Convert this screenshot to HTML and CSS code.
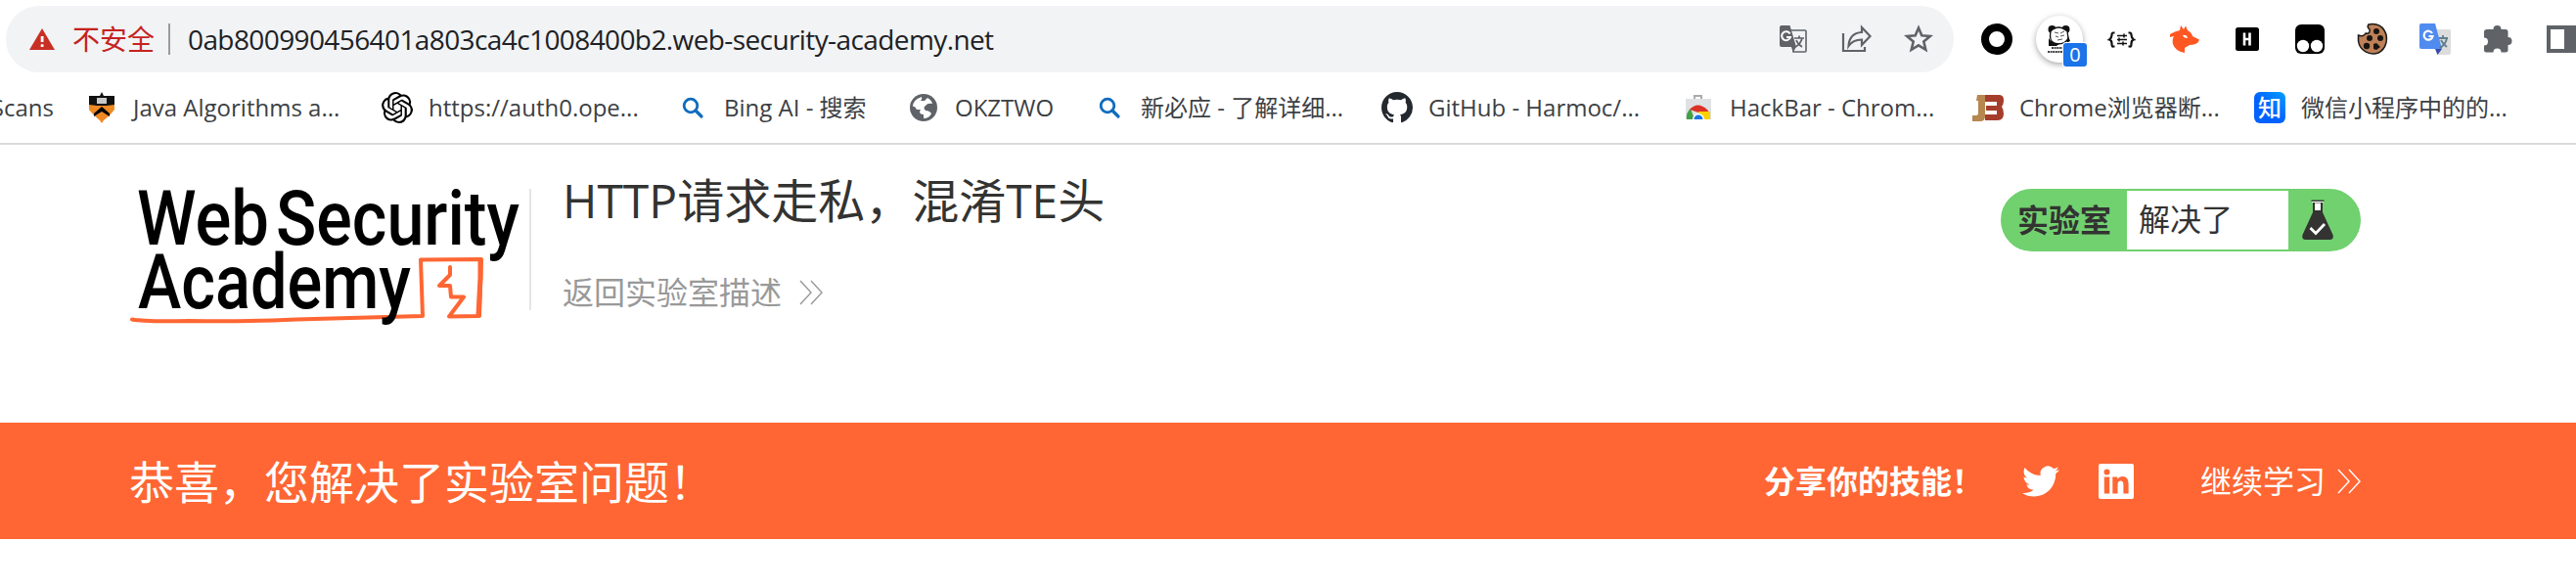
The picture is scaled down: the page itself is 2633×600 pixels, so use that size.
FILE: index.html
```html
<!DOCTYPE html>
<html lang="zh-CN">
<head>
<meta charset="utf-8">
<title>Web Security Academy</title>
<link rel="stylesheet" href="styles.css">
</head>
<body>
<header class="toolbar">
  <div class="omnibox">
    <svg class="warn" width="26" height="22" viewBox="0 0 26 22"><path d="M13 0 26 22H0Z" fill="#c93025"/><path d="M11.7 8h2.8v6h-2.8zM11.7 16.2h2.8V19h-2.8z" fill="#fff"/></svg>
    <span class="insecure">不安全</span>
    <span class="sep"></span>
    <span class="url">0ab800990456401a803ca4c1008400b2.web-security-academy.net</span>
    <div class="actions">
      <svg width="32" height="32" viewBox="0 0 32 32"><path d="M13 7h15q1 0 1 1v20q0 1-1 1H16z" fill="none" stroke="#5f6368" stroke-width="1.6"/><path d="M4 2h8.500l6.500 22 -3 5-2-5H4q-2 0-2-2V4q0-2 2-2z" fill="#5f6368"/><path d="M12.600 10.500A4.500 4.500 0 1 0 13 14H9" fill="none" stroke="#fff" stroke-width="2"/><path d="M17 15h10M22 12.500V15M25 15c-1 4-3 7-7 9M19 17c1 3 3 5 6 7" fill="none" stroke="#5f6368" stroke-width="1.700"/></svg>
      <svg width="32" height="32" viewBox="0 0 32 32" fill="none" stroke="#5f6368" stroke-width="2.200"><path d="M3 10v18h22v-4"/><path d="M8.500 23C9 14.500 14 9.500 22 9V4l8.500 9L22 22v-5.500C16 16.500 11.500 18.500 8.500 23z"/></svg>
      <svg width="32" height="32" viewBox="0 0 32 32"><path d="M16 4.500 19.300 12.300 27.800 13 21.300 18.500 23.300 26.800 16 22.300 8.700 26.800 10.700 18.500 4.200 13 12.700 12.300Z" fill="none" stroke="#5f6368" stroke-width="2.600"/></svg>
    </div>
  </div>
  <div class="extensions">
    <svg width="32" height="32" viewBox="0 0 32 32"><circle cx="16" cy="16" r="12" fill="#fff" stroke="#000" stroke-width="8"/></svg>
    <div class="panda">
      <svg width="26" height="30" viewBox="0 0 26 30"><circle cx="5.500" cy="5" r="4" fill="#111"/><circle cx="19.500" cy="5" r="4" fill="#111"/><path d="M4 7Q12-1 21 7L22 14Q18 22 8 19 2 17 4 7z" fill="#fff" stroke="#111" stroke-width="1.300"/><path d="M2 14Q5 20 14 19L10 22H2zM22 12l2 5-4 2z" fill="#111"/><path d="M8 8l4 1M14 9l4-2M9 12l3 1M14 12l4-1M11 16l5-1" stroke="#555"/><path d="M5 24h11M1 28h16" stroke="#444" stroke-width="2" stroke-dasharray="2 .6"/></svg>
      <span class="count">0</span>
    </div>
    <svg width="32" height="32" viewBox="0 0 32 32" fill="none" stroke="#111" stroke-width="2.200"><path d="M8.500 9.500H7Q5.500 9.500 5.500 12T3 16.500Q5.500 17 5.500 20.500T7 23.500H8.500M22.500 9.500H24Q25.500 9.500 25.500 12T28 16.500Q25.500 17 25.500 20.500T24 23.500H22.500"/><path d="M11 12.500h10M11 16.500h10M11 20.500h10M18 10.500v4M13 14.500v4M17 18.500v4" stroke-width="1.500"/></svg>
    <svg width="32" height="32" viewBox="0 0 32 32"><path d="M1 11Q6 8 11 7L12 2 15 6 17 2.500 19 7Q23 9 24 13L31 16.500 30 19Q27 22 21 22L16 25V30Q6 28 4 21 3 16 5 13L1 14z" fill="#ff5722"/><path d="M14 12q4-1 5 3-4 0-5-3" fill="#fff"/></svg>
    <svg width="32" height="32" viewBox="0 0 32 32"><rect x="4" y="4" width="24" height="24" rx="2.500" fill="#000"/><path d="M13 9.500v13M18.500 9.500v13M13 16h5" stroke="#fff" stroke-width="2.600"/></svg>
    <svg width="32" height="32" viewBox="0 0 32 32"><rect x="1" y="1" width="30" height="30" rx="6" fill="#000"/><circle cx="9" cy="23" r="6.200" fill="#fff"/><circle cx="23" cy="23" r="6.200" fill="#fff"/></svg>
    <svg width="32" height="32" viewBox="0 0 32 32"><path d="M12 1Q23-1 28 7C33 15 30 26 22 30 13 33 3 28 1.500 18L1.500 12Q7 14 9 10 14 11 13 6 10 4 12 1z" fill="#bd8058" stroke="#191919" stroke-width="1.500"/><g fill="#191411"><circle cx="20" cy="8" r="3"/><circle cx="13" cy="15" r="3"/><circle cx="24" cy="15" r="3"/><circle cx="10" cy="23" r="3.200"/><path d="M17 21l3-1 4 4-4 3-3-1z"/></g></svg>
    <svg width="32" height="32" viewBox="0 0 32 32"><path d="M12 6h18q2 0 2 2v22q0 2-2 2H18z" fill="#dcdcdc"/><path d="M16 26h7l-4.500 6z" fill="#3949ab"/><path d="M2 0h14l7 26H2q-2 0-2-2V2Q0 0 2 0z" fill="#508bf0"/><path d="M13 10a4.500 4.500 0 1 0 .500 3H9.500" fill="none" stroke="#fff" stroke-width="2.200"/><path d="M20 15h9M24 12v3M28 15q-1 6-7 10M22 17q2 4 6 7" fill="none" stroke="#607d8b" stroke-width="1.800"/></svg>
    <svg width="32" height="32" viewBox="0 0 32 32"><path d="M5 6h6.500a4 4 0 0 1 8 0H24q2.500 0 2.500 2.500V14a4 4 0 0 1 0 8v5q0 2.500-2.500 2.500H19.500a4 4 0 0 0-8 0H4.500Q2 29.500 2 27V22.500a4 4 0 0 0 0-8V8.500Q2 6 5 6z" fill="#5f6368"/></svg>
    <svg width="32" height="32" viewBox="0 0 32 32"><path d="M2 2h30v28H2zM6 6v20h14V6z" fill="#5f6368" fill-rule="evenodd"/></svg>
  </div>
</header>

<nav class="bookmarks">
  <div class="bm first"><span class="t0">Scans</span></div>
  <div class="bm"><svg width="32" height="32" viewBox="0 0 32 32"><path d="M3 12h26v6L24 24l-6 5-2 3-2-3-6-5-5-6z" fill="#f08a24"/><path d="M3 4h11l2-4 2 4h11v9l-8 1H11l-8-1z" fill="#111"/><path d="M11 6h10v6H11z" fill="#c9c9c9"/><path d="M16 15 24 22v3L16 20 8 25v-3z" fill="#000"/></svg><span class="t1">Java Algorithms a...</span></div>
  <div class="bm"><svg width="32" height="32" viewBox="0 0 24 24"><path d="M22.282 9.821a5.985 5.985 0 0 0-.516-4.910 6.046 6.046 0 0 0-6.510-2.900A6.065 6.065 0 0 0 4.981 4.182a5.985 5.985 0 0 0-3.998 2.900 6.046 6.046 0 0 0 .743 7.097 5.980 5.980 0 0 0 .510 4.911 6.051 6.051 0 0 0 6.515 2.900A5.985 5.985 0 0 0 13.260 24a6.056 6.056 0 0 0 5.772-4.206 5.990 5.990 0 0 0 3.998-2.900 6.056 6.056 0 0 0-.747-7.073zM13.260 22.430a4.476 4.476 0 0 1-2.876-1.040l.141-.081 4.779-2.758a.795.795 0 0 0 .393-.681v-6.737l2.020 1.169a.071.071 0 0 1 .038.052v5.583a4.504 4.504 0 0 1-4.495 4.493zM3.600 18.304a4.471 4.471 0 0 1-.535-3.014l.142.085 4.783 2.759a.771.771 0 0 0 .781 0l5.843-3.369v2.332a.080.080 0 0 1-.033.062L9.740 19.950a4.499 4.499 0 0 1-6.140-1.646zM2.341 7.896a4.485 4.485 0 0 1 2.366-1.973V11.600a.766.766 0 0 0 .388.677l5.815 3.354-2.021 1.169a.076.076 0 0 1-.071 0L3.988 14.013a4.504 4.504 0 0 1-1.647-6.117zm16.596 3.856-5.833-3.387 2.015-1.165a.076.076 0 0 1 .071 0l4.830 2.792a4.494 4.494 0 0 1-.676 8.104v-5.677a.790.790 0 0 0-.407-.667zm2.011-3.024-.142-.085-4.774-2.782a.776.776 0 0 0-.785 0L9.409 9.230V6.897a.066.066 0 0 1 .028-.061l4.830-2.787a4.499 4.499 0 0 1 6.681 4.661zM8.307 12.863l-2.020-1.164a.080.080 0 0 1-.038-.057V6.074a4.499 4.499 0 0 1 7.376-3.453l-.142.080-4.778 2.758a.795.795 0 0 0-.393.682zm1.097-2.365 2.602-1.500 2.607 1.500v2.999l-2.597 1.500-2.607-1.500z"/></svg><span class="t2">https://auth0.ope...</span></div>
  <div class="bm"><svg width="32" height="32" viewBox="0 0 32 32" fill="none" stroke="#0f6cbd"><circle cx="14" cy="14" r="6.800" stroke-width="2.800"/><path d="M19 19l6 6" stroke-width="3.200" stroke-linecap="round"/></svg><span class="t3">Bing AI - 搜索</span></div>
  <div class="bm"><svg width="32" height="32" viewBox="0 0 32 32"><circle cx="16" cy="16" r="14" fill="#5f6368"/><path d="M5 15Q5 8 14 5q1 2-1 4h4l3-3q4 2 5 6-5-1-7 2-3 2 0 5 4 0 6 3-2 5-8 5v-4q-4 0-4-3l1-2H9q-2-4-4-3z" fill="#fff"/></svg><span class="t4">OKZTWO</span></div>
  <div class="bm"><svg width="32" height="32" viewBox="0 0 32 32" fill="none" stroke="#0f6cbd"><circle cx="14" cy="14" r="6.800" stroke-width="2.800"/><path d="M19 19l6 6" stroke-width="3.200" stroke-linecap="round"/></svg><span class="t5">新必应 - 了解详细...</span></div>
  <div class="bm"><svg width="32" height="32" viewBox="0 0 16 16"><path fill="#24292f" d="M8 0C3.580 0 0 3.580 0 8c0 3.540 2.290 6.530 5.470 7.590.4.070.55-.17.55-.38 0-.19-.01-.82-.01-1.490-2.010.37-2.530-.49-2.690-.94-.09-.23-.48-.94-.82-1.130-.28-.15-.68-.52-.01-.53.63-.01 1.080.58 1.230.82.72 1.210 1.870.87 2.330.66.07-.52.28-.87.51-1.070-1.780-.2-3.640-.89-3.640-3.950 0-.87.31-1.590.82-2.150-.08-.2-.36-1.020.08-2.120 0 0 .67-.21 2.200.82.64-.18 1.320-.27 2-.27s1.360.09 2 .27c1.530-1.040 2.200-.82 2.200-.82.44 1.100.16 1.920.08 2.120.51.56.82 1.270.82 2.150 0 3.070-1.870 3.750-3.650 3.950.29.25.54.73.54 1.480 0 1.070-.01 1.930-.01 2.200 0 .21.15.46.55.38A8.010 8.010 0 0 0 16 8c0-4.420-3.580-8-8-8z"/></svg><span class="t6">GitHub - Harmoc/...</span></div>
  <div class="bm"><svg width="32" height="32" viewBox="0 0 32 32"><path d="M12 7V4h7v3" fill="none" stroke="#aaa" stroke-width="2"/><path d="M3 7h26v21H3z" fill="#dfe1e2"/><path d="M4 28q-1-7 4-11l4 11z" fill="#43a047"/><path d="M7 18q8-9 18 0l2 3H16z" fill="#db3226"/><path d="M16 20h12v8h-9z" fill="#fdd000"/><path d="M10 28a6 6 0 0 1 12 0" fill="#fff"/><path d="M11.500 28a4.500 4.500 0 0 1 9 0" fill="#1a73e8"/></svg><span class="t7">HackBar - Chrom...</span></div>
  <div class="bm"><svg width="32" height="32" viewBox="0 0 32 32"><path d="M5 3h8v22q0 5-5 5H0v-6h4q2 0 2-3V9H4z" fill="#b6874f"/><path d="M13 3h14q5 0 5 5 0 5-2 7 2 3 2 7 0 7-6 7H13v-6h12v-4H14v-5h11v-4H13z" fill="#a43d2b"/></svg><span class="t8">Chrome浏览器断...</span></div>
  <div class="bm"><span class="zhi">知</span><span class="t9">微信小程序中的的...</span></div>
</nav>

<section class="lab">
  <svg class="logo" width="408" height="150" viewBox="0 0 408 150">
    <g fill="none" stroke="#ff6633" stroke-linejoin="round" stroke-linecap="round"><path d="M2 139.500Q15 142 60 141 120 142 170 139.500L299 136 297 78.500 359 78 357 136 326 136.500 341 116.500H328L327 105H316L327 94V86" stroke-width="4"/><path d="M358 79V97L356 135" stroke-width="5"/></g>
    <g class="word"><text x="7" y="62.500" textLength="135" lengthAdjust="spacingAndGlyphs">Web</text><text x="149" y="62.500" textLength="249" lengthAdjust="spacingAndGlyphs">Security</text><text x="8" y="127.500" textLength="279" lengthAdjust="spacingAndGlyphs">Academy</text></g>
  </svg>
  <div class="title">
    <h1>HTTP请求走私，混淆TE头</h1>
    <a class="back">返回实验室描述 <svg width="24" height="26" viewBox="0 0 24 26" fill="none" stroke="#999" stroke-width="1.400"><path d="M1 1 12 13 1 25M12 1 23 13 12 25"/></svg></a>
  </div>
  <div class="status">
    <b>实验室</b><span>解决了</span>
    <svg width="34" height="42" viewBox="0 0 34 42"><path d="M12 2.500V13L1.500 36Q0 41 5 41H29Q34 41 32.500 36L22 13V2.500z" fill="#333332"/><path d="M14 3.500h6V11h-6zM11 1.500h12v1.500H11z" fill="#fff"/><path d="M10.500 1.200h13" stroke="#333332" stroke-width="1.400"/><path d="M9.500 29l5.500 5.500 9-9.500" fill="none" stroke="#fff" stroke-width="2.800"/></svg>
  </div>
</section>

<section class="banner">
  <h2>恭喜，您解决了实验室问题！</h2>
  <div class="share">
    <b>分享你的技能！</b>
    <svg class="twitter" width="38" height="38" viewBox="0 0 24 24"><path fill="#fff" d="M23.953 4.570a10 10 0 0 1-2.825.775 4.958 4.958 0 0 0 2.163-2.723c-.951.555-2.005.959-3.127 1.184a4.920 4.920 0 0 0-8.384 4.482C7.690 8.095 4.067 6.130 1.640 3.162a4.822 4.822 0 0 0-.666 2.475c0 1.710.87 3.213 2.188 4.096a4.904 4.904 0 0 1-2.228-.616v.060a4.923 4.923 0 0 0 3.946 4.827 4.996 4.996 0 0 1-2.212.085 4.936 4.936 0 0 0 4.604 3.417 9.867 9.867 0 0 1-6.102 2.105c-.39 0-.779-.023-1.170-.067a13.995 13.995 0 0 0 7.557 2.209c9.053 0 13.998-7.496 13.998-13.985 0-.21 0-.42-.015-.63A9.935 9.935 0 0 0 24 4.590z"/></svg>
    <svg class="linkedin" width="36" height="36" viewBox="0 0 36 36"><rect width="36" height="36" rx="2" fill="#fff"/><g fill="#ff6633"><circle cx="8.500" cy="8.500" r="3"/><path d="M5.800 13.500h5.400V30.500H5.800zM14.300 13.500h5v2.400q1.800-2.900 5.300-2.900 6 0 6 7.500v10h-5.200v-9q0-4-2.800-4-3.100 0-3.100 4v9h-5.200z"/></g></svg>
    <a class="next">继续学习<svg width="24" height="26" viewBox="0 0 24 26" fill="none" stroke="#fff" stroke-width="1.400"><path d="M1 1 12 13 1 25M12 1 23 13 12 25"/></svg></a>
  </div>
</section>
</body>
</html>
```
FILE: styles.css
```css
* { box-sizing: border-box; }
body {
  margin: 0;
  width: 2633px;
  height: 600px;
  overflow: hidden;
  background: #fff;
  color: #333332;
  font-family: "Open Sans", "Noto Sans CJK SC", sans-serif;
  font-size: 32px;
  line-height: 1;
  white-space: nowrap;
}
svg { display: block; flex: none; overflow: visible; }
h1, h2 { margin: 0; font-weight: 400; }

.toolbar { display: flex; height: 80px; padding: 6px 0 0 6px; }
.omnibox {
  display: flex; align-items: center;
  width: 1992px; height: 68px; padding: 0 20px 0 24px;
  border-radius: 34px; background: #f1f3f5; font-size: 28px;
}
.insecure { margin-left: 18px; width: 84px; color: #c5221f; }
.sep { width: 2px; height: 32px; margin: 0 18px 0 14px; background: #9a9b9d; }
.url { color: #202124; letter-spacing: -0.6px; }
.actions { display: flex; gap: 32px; margin-left: auto; }
.extensions { display: flex; align-items: center; height: 68px; margin-left: 28px; gap: 32px; }
.panda {
  position: relative; display: flex; flex: none; justify-content: center; align-items: center;
  width: 48px; height: 48px; margin: 0 -8px; border-radius: 24px;
  background: #fff; box-shadow: 0 2px 6px rgba(0,0,0,.35);
}
.count {
  position: absolute; left: 28px; top: 28px; width: 24px; height: 24px;
  border-radius: 3px; background: #1a73e8; color: #fff; box-shadow: 0 0 0 1px #fff;
  font-size: 20px; line-height: 24px; text-align: center;
}

.bookmarks {
  display: grid; height: 68px; padding-bottom: 6px;
  grid-template-columns: 88px 302px 302px 236px 190px 294px 308px 296px 288px 1fr;
  align-items: center; border-bottom: 2px solid #dadcdc;
  color: #3c4043; font-size: 24px;
}
.bm { display: flex; align-items: center; gap: 16px; line-height: 32px; }
.first { justify-content: flex-end; width: 55px; }
.zhi {
  width: 32px; height: 32px; border-radius: 6px; text-align: center; line-height: 31px;
  background: linear-gradient(45deg, #0061ff 45%, #00a1ff); color: #fff; font-weight: 500;
}

.lab { display: flex; align-items: flex-start; height: 284px; padding: 33px 220px 0 133px; }
.word { font-family: Roboto, sans-serif; font-size: 77px; font-weight: 500; fill: #000; }
.logo { margin-top: 6px; }
.title { margin-left: 0; padding-left: 32px; position: relative; }
.title { border-left: 2px solid #e5e5e5; height: 124px; margin-top: 12px; }
.title h1 { font-size: 48px; line-height: 60px; margin-top: -18px; }
.back { display: flex; align-items: center; gap: 18px; margin-top: 42px; line-height: 44px; color: #999; }
.status {
  display: flex; align-items: center; width: 368px; height: 64px; margin: 12px 0 0 auto;
  border: 2px solid #71d16f; border-radius: 32px; background: #71d16f;
}
.status b { width: 127px; padding-left: 15px; }
.status span { width: 165px; height: 60px; padding-left: 12px; background: #fff; line-height: 58px; }
.status svg { margin-left: 13px; }

.banner {
  display: flex; align-items: center; height: 119px; padding: 0 220px 0 132px;
  background: #ff6633; color: #fff;
}
.banner h2 { font-size: 46px; }
.share { display: flex; align-items: center; margin-left: auto; }
.share b { width: 264px; }
.linkedin { margin: 0 68px 0 40px; }
.next { display: flex; align-items: center; gap: 12px; }
```
